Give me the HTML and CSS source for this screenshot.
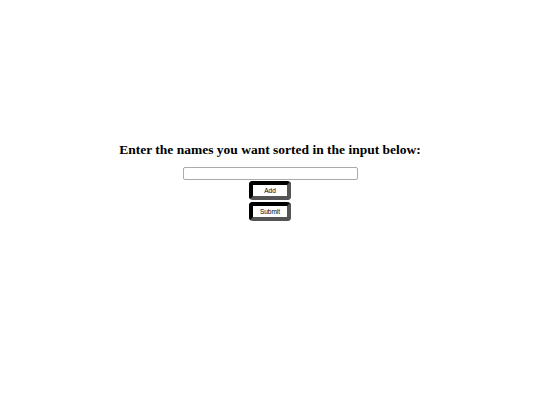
FILE: index.html
```
<!DOCTYPE html>
<html>
<head>
<meta charset="utf-8">
<link rel="stylesheet" href="styles.css">
</head>
<body>
<div class="wrap">
  <h2 class="title">Enter the names you want sorted in the input below:</h2>
  <input class="names" type="text">
  <button class="btn">Add</button>
  <button class="btn">Submit</button>
</div>
</body>
</html>
```
FILE: styles.css
```
html, body { margin: 0; padding: 0; background: #fff; }
.wrap {
  display: flex;
  flex-direction: column;
  align-items: center;
  padding-top: 142px;
}
.title {
  font-family: "Liberation Serif", serif;
  font-weight: bold;
  font-size: 13.5px;
  line-height: 16px;
  margin: 0 0 9px 0;
  color: #000;
}
.names {
  box-sizing: border-box;
  width: 175px;
  height: 13px;
  border: 1px solid #aaa;
  border-radius: 2px;
  padding: 0;
  margin: 0 0 1px 0;
}
.btn {
  box-sizing: border-box;
  width: 42px;
  height: 19px;
  margin: 0 0 2px 0;
  padding: 0;
  font-family: "Liberation Sans", sans-serif;
  font-size: 6.5px;
  background: #fff;
  color: #000;
  border-style: solid;
  border-width: 4px;
  border-color: #000 #555 #555 #000;
  border-radius: 4px;
}
```
